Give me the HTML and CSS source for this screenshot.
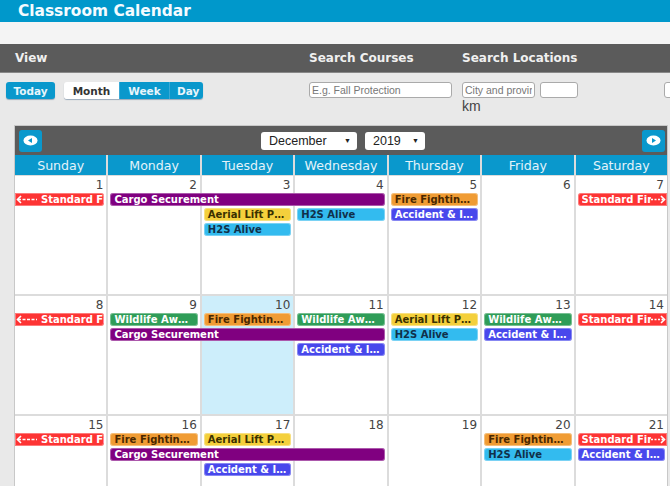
FILE: index.html
```html
<!DOCTYPE html>
<html>
  <head>
    <title>Classroom Calendar</title>
    <link rel="stylesheet" href="styles.css">
  </head>
  <body>
    <header class="app-title">Classroom Calendar</header>
    <div class="subbar"></div>

    <div class="filters">
      <div class="filter-heads">
        <div class="head-view">View</div>
        <div>Search Courses</div>
        <div>Search Locations</div>
      </div>
      <div class="filter-body">
        <div class="view-buttons">
          <button class="btn">Today</button>
          <div class="btn-group">
            <button class="btn active">Month</button>
            <button class="btn">Week</button>
            <button class="btn">Day</button>
          </div>
        </div>
        <div>
          <input class="course-input" placeholder="E.g. Fall Protection">
        </div>
        <div class="locations">
          <div class="loc-inputs">
            <input class="city-input" placeholder="City and province">
            <input class="km-input">
            <input class="extra-input">
          </div>
          <div class="km">km</div>
        </div>
      </div>
    </div>

    <div class="calendar">
      <div class="cal-head">
        <button class="nav-btn">
          <svg width="15" height="11" viewBox="0 0 15 11"><ellipse cx="7.5" cy="5.5" rx="7" ry="5" fill="#fff"/><path d="M5 5.5 L9 3 L9 8 Z" fill="#0a98cc"/></svg>
        </button>
        <div class="pickers">
          <div class="picker month-picker">December <span class="caret">&#9660;</span></div>
          <div class="picker year-picker">2019 <span class="caret">&#9660;</span></div>
        </div>
        <button class="nav-btn">
          <svg width="15" height="11" viewBox="0 0 15 11"><ellipse cx="7.5" cy="5.5" rx="7" ry="5" fill="#fff"/><path d="M10 5.5 L6 3 L6 8 Z" fill="#0a98cc"/></svg>
        </button>
      </div>

      <div class="daynames">
        <div>Sunday</div>
        <div>Monday</div>
        <div>Tuesday</div>
        <div>Wednesday</div>
        <div>Thursday</div>
        <div>Friday</div>
        <div>Saturday</div>
      </div>

      <div class="weeks">
        <!-- week 1 -->
        <div class="week">
          <div class="day d1"><span class="num">1</span></div>
          <div class="day d2"><span class="num">2</span></div>
          <div class="day d3"><span class="num">3</span></div>
          <div class="day d4"><span class="num">4</span></div>
          <div class="day d5"><span class="num">5</span></div>
          <div class="day d6"><span class="num">6</span></div>
          <div class="day d7"><span class="num">7</span></div>

          <div class="ev red cont-left d1 r1"><svg class="arrow" width="22" height="9" viewBox="0 0 22 9"><path d="M5 1 L1.5 4.5 L5 8" stroke="#fff" stroke-width="1.6" fill="none"/><path d="M2 4.5 H21" stroke="#fff" stroke-width="1.6" stroke-dasharray="3 1.5"/></svg>Standard First Aid</div>
          <div class="ev purple d2 span3 r1">Cargo Securement</div>
          <div class="ev yellow d3 r2">Aerial Lift Platform</div>
          <div class="ev sky d3 r3">H2S Alive</div>
          <div class="ev sky d4 r2">H2S Alive</div>
          <div class="ev orange d5 r1">Fire Fighting Training</div>
          <div class="ev blue d5 r2">Accident &amp; Incident</div>
          <div class="ev red cont-right d7 r1"><span class="ev-text">Standard First Aid</span><svg class="arrow" width="15" height="9" viewBox="0 0 15 9"><path d="M0 4.5 H13" stroke="#fff" stroke-width="1.6" stroke-dasharray="2 1.5"/><path d="M10 1 L13.5 4.5 L10 8" stroke="#fff" stroke-width="1.6" fill="none"/></svg></div>
        </div>

        <!-- week 2 -->
        <div class="week">
          <div class="day d1"><span class="num">8</span></div>
          <div class="day d2"><span class="num">9</span></div>
          <div class="day d3 today"><span class="num">10</span></div>
          <div class="day d4"><span class="num">11</span></div>
          <div class="day d5"><span class="num">12</span></div>
          <div class="day d6"><span class="num">13</span></div>
          <div class="day d7"><span class="num">14</span></div>

          <div class="ev red cont-left d1 r1"><svg class="arrow" width="22" height="9" viewBox="0 0 22 9"><path d="M5 1 L1.5 4.5 L5 8" stroke="#fff" stroke-width="1.6" fill="none"/><path d="M2 4.5 H21" stroke="#fff" stroke-width="1.6" stroke-dasharray="3 1.5"/></svg>Standard First Aid</div>
          <div class="ev green d2 r1">Wildlife Awareness</div>
          <div class="ev orange d3 r1">Fire Fighting Training</div>
          <div class="ev green d4 r1">Wildlife Awareness</div>
          <div class="ev purple d2 span3 r2">Cargo Securement</div>
          <div class="ev blue d4 r3">Accident &amp; Incident</div>
          <div class="ev yellow d5 r1">Aerial Lift Platform</div>
          <div class="ev sky d5 r2">H2S Alive</div>
          <div class="ev green d6 r1">Wildlife Awareness</div>
          <div class="ev blue d6 r2">Accident &amp; Incident</div>
          <div class="ev red cont-right d7 r1"><span class="ev-text">Standard First Aid</span><svg class="arrow" width="15" height="9" viewBox="0 0 15 9"><path d="M0 4.5 H13" stroke="#fff" stroke-width="1.6" stroke-dasharray="2 1.5"/><path d="M10 1 L13.5 4.5 L10 8" stroke="#fff" stroke-width="1.6" fill="none"/></svg></div>
        </div>

        <!-- week 3 -->
        <div class="week">
          <div class="day d1"><span class="num">15</span></div>
          <div class="day d2"><span class="num">16</span></div>
          <div class="day d3"><span class="num">17</span></div>
          <div class="day d4"><span class="num">18</span></div>
          <div class="day d5"><span class="num">19</span></div>
          <div class="day d6"><span class="num">20</span></div>
          <div class="day d7"><span class="num">21</span></div>

          <div class="ev red cont-left d1 r1"><svg class="arrow" width="22" height="9" viewBox="0 0 22 9"><path d="M5 1 L1.5 4.5 L5 8" stroke="#fff" stroke-width="1.6" fill="none"/><path d="M2 4.5 H21" stroke="#fff" stroke-width="1.6" stroke-dasharray="3 1.5"/></svg>Standard First Aid</div>
          <div class="ev orange d2 r1">Fire Fighting Training</div>
          <div class="ev yellow d3 r1">Aerial Lift Platform</div>
          <div class="ev purple d2 span3 r2">Cargo Securement</div>
          <div class="ev blue d3 r3">Accident &amp; Incident</div>
          <div class="ev orange d6 r1">Fire Fighting Training</div>
          <div class="ev sky d6 r2">H2S Alive</div>
          <div class="ev red cont-right d7 r1"><span class="ev-text">Standard First Aid</span><svg class="arrow" width="15" height="9" viewBox="0 0 15 9"><path d="M0 4.5 H13" stroke="#fff" stroke-width="1.6" stroke-dasharray="2 1.5"/><path d="M10 1 L13.5 4.5 L10 8" stroke="#fff" stroke-width="1.6" fill="none"/></svg></div>
          <div class="ev blue d7 r2">Accident &amp; Incident</div>
        </div>
      </div>
    </div>
  </body>
</html>
```

FILE: styles.css
```css
body{
  margin: 0;
  background-color: #e9e9e9;
  font-family: "DejaVu Sans", Verdana, sans-serif;
  overflow: hidden;
  height: 486px;
}

.app-title{
  height: 22px;
  background-color: #0098cb;
  color: #f4fbff;
  font-size: 15.4px;
  font-weight: bold;
  line-height: 22px;
  padding-left: 18px;
}

.subbar{
  height: 22px;
  background-color: #f4f4f4;
}

/* filter panel */
.filter-heads, .filter-body{
  display: grid;
  grid-template-columns: 303px 153px 1fr;
  padding-left: 6px;
}

.filter-heads{
  height: 28px;
  background-color: #5b5b5b;
  color: #f0f0f0;
  font-size: 12px;
  font-weight: bold;
  line-height: 29px;
  border-bottom: 1px solid #888;
}

.head-view{
  padding-left: 9px;
}

.filter-body{
  height: 52px;
  box-sizing: border-box;
  padding-top: 9px;
  overflow: hidden;
}

.view-buttons{
  display: flex;
  align-items: flex-start;
  column-gap: 9px;
}

.btn{
  height: 17px;
  padding: 0 7px;
  border: none;
  border-radius: 3px;
  background-color: #0a98cc;
  color: #e8f5fb;
  font-family: "DejaVu Sans", Verdana, sans-serif;
  font-size: 10.5px;
  font-weight: bold;
  box-shadow: 0 1px 1px #9ab;
}

.view-buttons > .btn{
  width: 49px;
}

.btn-group{
  display: flex;
  border-radius: 3px;
  overflow: hidden;
  box-shadow: 0 1px 1px #9ab;
}

.btn-group .btn{
  border-radius: 0;
  box-shadow: none;
  border-left: 1px solid #3aa9d6;
}

.btn-group .btn:first-child{
  border-left: none;
}

.btn-group .active{
  width: 55px;
  background-color: #fff;
  color: #333;
}

.btn-group .btn:nth-child(2){
  width: 50px;
}

.btn-group .btn:nth-child(3){
  width: 34px;
}

input{
  display: block;
  box-sizing: border-box;
  height: 16px;
  border: 1px solid #aaa;
  border-radius: 3px;
  background-color: #fff;
  font-family: "Liberation Sans", Arial, sans-serif;
  font-size: 10.5px;
  padding: 0 2px;
}

input::placeholder{
  color: #777;
}

.course-input{
  width: 143px;
}

.loc-inputs{
  display: flex;
  column-gap: 5px;
}

.city-input{
  width: 73px;
}

.km-input{
  width: 38px;
}

.extra-input{
  width: 40px;
  margin-left: 81px;
  flex-shrink: 0;
}

.km{
  font-family: "Liberation Sans", Arial, sans-serif;
  font-size: 14px;
  color: #444;
  line-height: 17px;
}

/* calendar */
.calendar{
  width: 652px;
  margin-left: 14px;
  border: 1px solid #c8c8c8;
  border-bottom: none;
}

.cal-head{
  height: 29px;
  background-color: #5b5b5b;
  display: flex;
  align-items: center;
  justify-content: space-between;
  padding: 0 2px 0 4px;
}

.nav-btn{
  width: 23px;
  height: 22px;
  padding: 0;
  border: none;
  border-radius: 3px;
  background-color: #0a98cc;
  display: flex;
  align-items: center;
  justify-content: center;
}

.pickers{
  display: flex;
  column-gap: 8px;
  margin-left: 2px;
}

.picker{
  height: 18px;
  box-sizing: border-box;
  background-color: #fff;
  border-radius: 3px;
  font-family: "Liberation Sans", Arial, sans-serif;
  font-size: 12.5px;
  color: #222;
  line-height: 18px;
  padding-left: 8px;
  display: flex;
  justify-content: space-between;
}

.month-picker{
  width: 96px;
}

.year-picker{
  width: 60px;
}

.caret{
  font-size: 7px;
  padding-right: 6px;
}

.daynames{
  display: grid;
  grid-template-columns: repeat(7, 1fr);
  column-gap: 2px;
  background-color: #dcdcdc;
}

.daynames div{
  height: 20px;
  background-color: #0a98cc;
  color: #e4f3fa;
  font-size: 12.6px;
  line-height: 21px;
  text-align: center;
}

.weeks{
  display: flex;
  flex-direction: column;
  row-gap: 2px;
  padding-top: 1px;
  background-color: #dcdcdc;
}

.week{
  height: 118px;
  display: grid;
  grid-template-columns: repeat(7, 1fr);
  grid-template-rows: 17px 15px 15px 15px 1fr;
  column-gap: 2px;
}

.day{
  grid-row: 1 / -1;
  background-color: #fff;
  text-align: right;
}

.day.today{
  background-color: #cdeefb;
}

.num{
  display: block;
  padding: 2px 3px 0 0;
  font-size: 12px;
  color: #444;
  line-height: 14px;
}

.d1{ grid-column-start: 1; }
.d2{ grid-column-start: 2; }
.d3{ grid-column-start: 3; }
.d4{ grid-column-start: 4; }
.d5{ grid-column-start: 5; }
.d6{ grid-column-start: 6; }
.d7{ grid-column-start: 7; }
.span3{ grid-column-end: span 3; }
.r1{ grid-row-start: 2; }
.r2{ grid-row-start: 3; }
.r3{ grid-row-start: 4; }

.ev{
  z-index: 1;
  height: 13px;
  box-sizing: border-box;
  margin: 0 2px;
  padding: 0 4px;
  border-radius: 3px;
  font-size: 10px;
  font-weight: bold;
  line-height: 13px;
  white-space: nowrap;
  overflow: hidden;
  text-overflow: ellipsis;
  color: #fff;
  box-shadow: 0 0 0 1px rgba(255,255,255,.35) inset;
}

.ev.cont-left{
  margin-left: 0;
  padding-left: 1px;
  border-radius: 0 3px 3px 0;
  text-overflow: clip;
  display: flex;
  align-items: center;
}

.ev.cont-left .arrow{
  flex-shrink: 0;
  margin-right: 3px;
}

.ev.cont-right{
  margin-right: 0;
  padding-right: 1px;
  border-radius: 3px 0 0 3px;
  display: flex;
  align-items: center;
}

.ev-text{
  overflow: hidden;
  flex: 1;
}

.cont-right .arrow{
  flex-shrink: 0;
}

.red{ background-color: #fd3434; }
.purple{ background-color: #800080; }
.yellow{ background-color: #f4d03c; color: #3a3000; }
.sky{ background-color: #33bbef; color: #10304a; }
.orange{ background-color: #f09c34; color: #4a2800; }
.blue{ background-color: #4848ec; }
.green{ background-color: #2f9d58; }
```
